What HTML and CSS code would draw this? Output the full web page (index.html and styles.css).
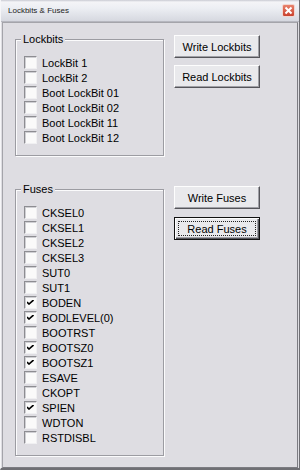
FILE: index.html
```html
<!DOCTYPE html>
<html lang="en">
    <head>
        <meta charset="UTF-8" />
        <title>Lockbits &amp; Fuses</title>
        <link rel="stylesheet" href="styles.css">
    </head>
    <body>
        <div class="window">
            <div class="titlebar">
                <span class="title">Lockbits &amp; Fuses</span>
                <span class="close">
                    <svg width="9" height="9" viewBox="0 0 9 9">
                        <path d="M1.5 1.5 L7.5 7.5 M7.5 1.5 L1.5 7.5" stroke="#fff" stroke-width="2" />
                    </svg>
                </span>
            </div>

            <div class="panel">
                <!-- Lockbits -->
                <div class="section">
                    <fieldset class="group">
                        <legend>Lockbits</legend>
                        <div class="list">
                            <label class="check"><span class="box"></span>LockBit 1</label>
                            <label class="check"><span class="box"></span>LockBit 2</label>
                            <label class="check"><span class="box"></span>Boot LockBit 01</label>
                            <label class="check"><span class="box"></span>Boot LockBit 02</label>
                            <label class="check"><span class="box"></span>Boot LockBit 11</label>
                            <label class="check"><span class="box"></span>Boot LockBit 12</label>
                        </div>
                    </fieldset>
                    <div class="buttons">
                        <button class="btn">Write Lockbits</button>
                        <button class="btn">Read Lockbits</button>
                    </div>
                </div>

                <!-- Fuses -->
                <div class="section fuses">
                    <fieldset class="group">
                        <legend>Fuses</legend>
                        <div class="list">
                            <label class="check"><span class="box"></span>CKSEL0</label>
                            <label class="check"><span class="box"></span>CKSEL1</label>
                            <label class="check"><span class="box"></span>CKSEL2</label>
                            <label class="check"><span class="box"></span>CKSEL3</label>
                            <label class="check"><span class="box"></span>SUT0</label>
                            <label class="check"><span class="box"></span>SUT1</label>
                            <label class="check"><span class="box on"></span>BODEN</label>
                            <label class="check"><span class="box on"></span>BODLEVEL(0)</label>
                            <label class="check"><span class="box"></span>BOOTRST</label>
                            <label class="check"><span class="box on"></span>BOOTSZ0</label>
                            <label class="check"><span class="box on"></span>BOOTSZ1</label>
                            <label class="check"><span class="box"></span>ESAVE</label>
                            <label class="check"><span class="box"></span>CKOPT</label>
                            <label class="check"><span class="box on"></span>SPIEN</label>
                            <label class="check"><span class="box"></span>WDTON</label>
                            <label class="check"><span class="box"></span>RSTDISBL</label>
                        </div>
                    </fieldset>
                    <div class="buttons">
                        <button class="btn">Write Fuses</button>
                        <button class="btn default"><span class="focus">Read Fuses</span></button>
                    </div>
                </div>
            </div>
        </div>
    </body>
</html>
```

FILE: styles.css
```css
body {
    margin: 0;
    font-family: "Liberation Sans", Arial, sans-serif;
    font-size: 11px;
    color: #000;
    background: #fff;
}
.window {
    width: 300px;
    height: 470px;
    box-sizing: border-box;
    background: #dedde2;
    border-left: 1px solid #f6f6f8;
    border-right: 1px solid #6f6f74;
    border-bottom: 2px solid #6f6f74;
    display: flex;
    flex-direction: column;
}
.titlebar {
    height: 22px;
    box-sizing: border-box;
    background: linear-gradient(#c9cad2 0, #f4f4f7 2px, #eceef3 40%, #d6d8e0 100%);
    border-bottom: 1px solid #b6b7bf;
    display: flex;
    align-items: center;
    justify-content: space-between;
    padding: 0 3px 0 7px;
}
.title {
    font-size: 8px;
    color: #222;
}
.close {
    width: 13px;
    height: 13px;
    box-sizing: border-box;
    border: 1px solid #f2d6d0;
    border-radius: 2px;
    background: linear-gradient(#e8826c, #c9412d);
    display: flex;
    align-items: center;
    justify-content: center;
    margin-right: 1px;
}
.close svg {
    display: block;
}
.panel {
    flex: 1;
    margin: 0 1px 0 1px;
    border: 1px solid #a4a4aa;
    border-right-color: #7c7c82;
    border-bottom-color: #7c7c82;
    padding: 10px 0 0 12px;
}
.section {
    display: flex;
    align-items: flex-start;
}
.fuses {
    margin-top: 27px;
}
.group {
    width: 149px;
    box-sizing: border-box;
    margin: 0;
    padding: 9px 0 10px 0;
    border: 1px solid #9c9ca2;
    box-shadow: inset 1px 1px 0 #fbfbfc, 1px 1px 0 #fbfbfc;
}
.group legend {
    margin-left: 5px;
    padding: 0 2px;
    line-height: 13px;
    background: #dedde2;
}
.list {
    padding-left: 8px;
}
.check {
    display: flex;
    align-items: center;
    height: 15px;
    gap: 5px;
    white-space: nowrap;
}
.box {
    width: 13px;
    height: 13px;
    box-sizing: border-box;
    background: #fafafa;
    border: 1px solid;
    border-color: #8d8d92 #f0f0f2 #f0f0f2 #8d8d92;
    box-shadow: inset 1px 1px 0 #cfcfd3;
    position: relative;
}
.box.on::after {
    content: "";
    position: absolute;
    left: 2px;
    top: 3px;
    width: 7px;
    height: 5px;
    background: no-repeat center/7px 5px url("data:image/svg+xml;utf8,<svg xmlns='http://www.w3.org/2000/svg' width='7' height='5' viewBox='0 0 7 5'><path d='M0 2 L2 4 L6.5 0' fill='none' stroke='black' stroke-width='1.6'/></svg>");
}
.buttons {
    display: flex;
    flex-direction: column;
    gap: 7px;
    margin-left: 10px;
    margin-top: 2px;
}
.fuses .buttons {
    margin-top: 3px;
    gap: 8px;
}
.btn {
    width: 86px;
    height: 23px;
    box-sizing: border-box;
    font-family: "Liberation Sans", Arial, sans-serif;
    font-size: 11px;
    color: #000;
    background: #e9e9ec;
    border: 1px solid;
    border-color: #fdfdfd #55555a #55555a #fdfdfd;
    box-shadow: inset -1px -1px 0 #a0a0a6;
    padding: 0;
}
.btn.default {
    border: 1px solid #111;
    box-shadow: inset 1px 1px 0 #fdfdfd, inset -1px -1px 0 #55555a, inset -2px -2px 0 #a0a0a6;
    padding: 3px;
}
.focus {
    display: flex;
    align-items: center;
    justify-content: center;
    height: 100%;
    box-sizing: border-box;
    border: 1px dotted #222;
}
```
